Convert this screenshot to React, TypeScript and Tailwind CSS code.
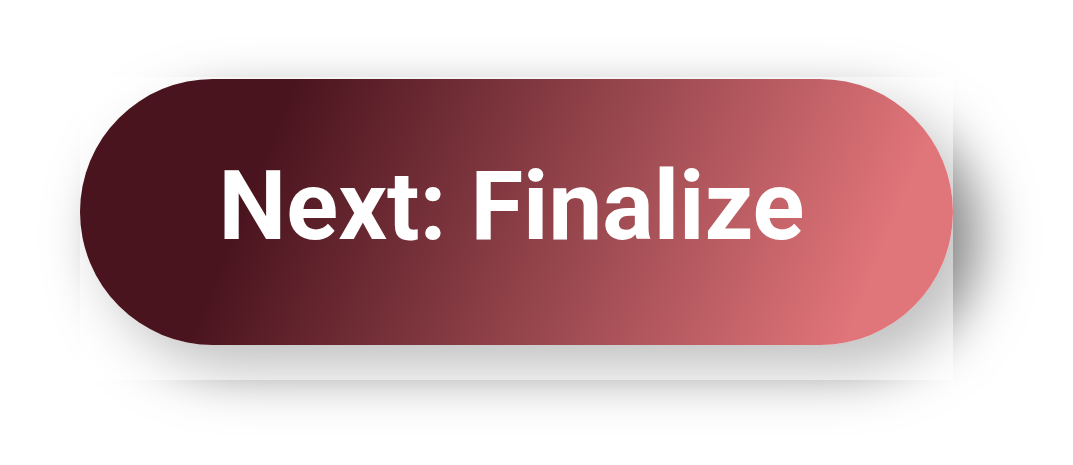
export default function App() {
  return (
    <div className="w-[1073px] h-[465px] bg-white pt-[77px] pl-[80px] overflow-hidden">
      <div className="relative w-[873px] h-[303px]">
        {/* shadow layer, lightened inside the frame by the sheet above it */}
        <div className="absolute left-0 top-[2px] w-[873px] h-[266px] rounded-full shadow-[24px_24px_56px_rgba(0,0,0,0.5)]" />
        <div className="absolute inset-0 bg-white/50" />
        <div className="relative pt-[2px]">
          <button
            type="button"
            className="w-[873px] h-[266px] rounded-full flex items-center justify-center bg-[linear-gradient(112deg,#4a141e_22%,#e0757a_89%)] text-white font-bold text-[96px] leading-none pb-[12px] pr-[10px] font-['Roboto','Liberation_Sans',sans-serif]"
          >
            Next: Finalize
          </button>
        </div>
      </div>
    </div>
  );
}
